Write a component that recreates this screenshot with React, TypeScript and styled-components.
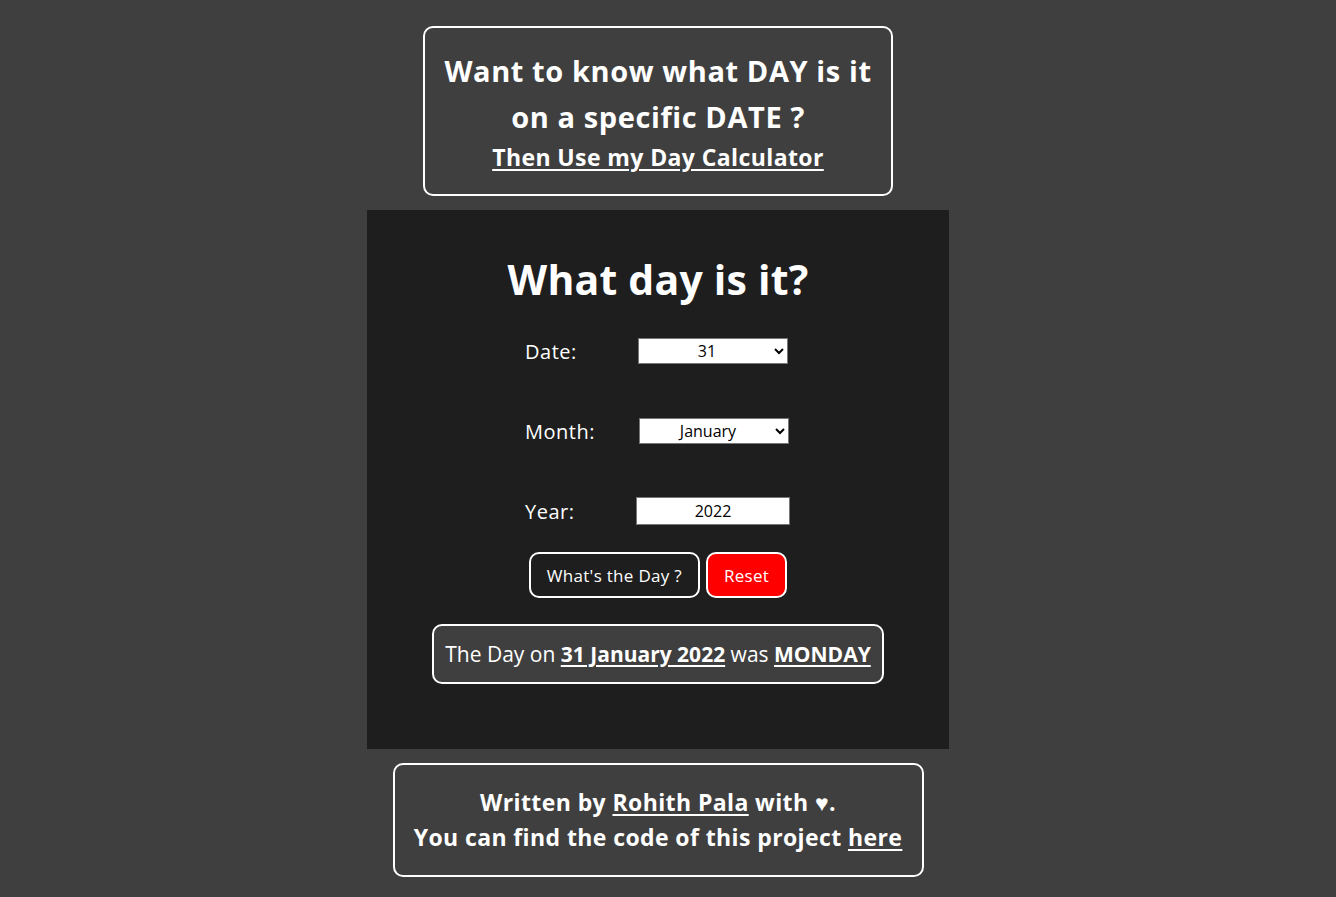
import React, { useState } from "react";
import styled, { createGlobalStyle } from "styled-components";

const Global = createGlobalStyle`
  html, body { margin: 0; padding: 0; background: #3f3f3f; }
  body { font-family: "Open Sans", "Liberation Sans", sans-serif; color: #fff; }
`;

const Page = styled.div`
  display: flex;
  flex-direction: column;
  align-items: center;
  padding-top: 26px;
  padding-right: 20px;
  gap: 14px;
  min-height: 897px;
  box-sizing: border-box;
`;

const Banner = styled.div`
  width: 470px;
  height: 170px;
  box-sizing: border-box;
  border: 2px solid #fff;
  border-radius: 10px;
  display: flex;
  flex-direction: column;
  align-items: center;
  justify-content: center;
  text-align: center;
`;

const BannerTitle = styled.div`
  font-size: 29px;
  font-weight: 700;
  line-height: 46px;
  letter-spacing: 0.6px;
`;

const BannerLink = styled.a`
  font-size: 23px;
  font-weight: 700;
  color: #fff;
  text-decoration: underline;
  text-underline-offset: 3px;
  line-height: 34px;
  letter-spacing: 0.4px;
`;

const Card = styled.div`
  width: 582px;
  height: 539px;
  box-sizing: border-box;
  background: #1e1e1e;
  display: flex;
  flex-direction: column;
  align-items: center;
  padding-top: 40px;
`;

const Title = styled.h1`
  margin: 0;
  font-size: 41px;
  font-weight: 700;
  line-height: 58px;
  letter-spacing: 0.2px;
`;

const Form = styled.div`
  display: grid;
  grid-template-columns: 113px 155px;
  grid-auto-rows: 80px;
  margin-left: 2px;
  align-items: center;
  margin-top: 3px;
`;

const Row = styled.div`
  display: contents;
`;

const Label = styled.label`
  font-size: 20px;
  font-weight: 400;
  letter-spacing: 0.5px;
`;

const Select = styled.select<{ $shift?: number }>`
  width: 150px;
  height: 26px;
  margin-left: ${(p) => p.$shift ?? 0}px;
  font-family: "Open Sans", "Liberation Sans", sans-serif;
  font-size: 16px;
  text-align: center;
  text-align-last: center;
  background: #fff;
  color: #000;
  border: 1px solid #767676;
  border-radius: 0;
`;

const YearInput = styled.input`
  width: 154px;
  height: 28px;
  box-sizing: border-box;
  margin-left: -2px;
  font-family: "Open Sans", "Liberation Sans", sans-serif;
  font-size: 16px;
  text-align: center;
  border: 1px solid #767676;
  color: #000;
  background: #fff;
  padding: 0;
`;

const Buttons = styled.div`
  display: flex;
  gap: 6px;
  margin-top: 1px;
`;

const Button = styled.button<{ $danger?: boolean }>`
  height: 46px;
  padding: 0 16px;
  border: 2px solid #fff;
  border-radius: 10px;
  background: ${(p) => (p.$danger ? "#ff0000" : "#1e1e1e")};
  color: #fff;
  font-family: "Open Sans", "Liberation Sans", sans-serif;
  font-size: 17px;
  letter-spacing: 0.3px;
  cursor: pointer;
`;

const Result = styled.div`
  margin-top: 26px;
  width: 452px;
  height: 60px;
  box-sizing: border-box;
  background: #3f3f3f;
  border: 2px solid #fff;
  border-radius: 10px;
  display: flex;
  align-items: center;
  justify-content: center;
  font-size: 21px;
  white-space: nowrap;
`;

const Strong = styled.span`
  font-weight: 700;
  text-decoration: underline;
  text-underline-offset: 3px;
`;

const Footer = styled.div`
  width: 531px;
  height: 114px;
  box-sizing: border-box;
  border: 2px solid #fff;
  border-radius: 10px;
  display: flex;
  flex-direction: column;
  align-items: center;
  justify-content: center;
  font-size: 23px;
  font-weight: 700;
  line-height: 35px;
  letter-spacing: 0.4px;
  text-align: center;
`;

const FooterLink = styled.a`
  color: #fff;
  text-decoration: underline;
  text-underline-offset: 3px;
`;

const months = [
  "January","February","March","April","May","June","July","August","September","October","November","December",
];

export default function App() {
  const [date, setDate] = useState("31");
  const [month, setMonth] = useState("January");
  const [year, setYear] = useState("2022");
  return (
    <>
      <Global />
      <Page>
        <Banner>
          <BannerTitle>
            Want to know what DAY is it
            <br />
            on a specific DATE ?
          </BannerTitle>
          <BannerLink href="#">Then Use my Day Calculator</BannerLink>
        </Banner>
        <Card>
          <Title>What day is it?</Title>
          <Form>
            <Row>
              <Label>Date:</Label>
              <Select value={date} onChange={(e) => setDate(e.target.value)}>
                {Array.from({ length: 31 }, (_, i) => (
                  <option key={i} value={String(i + 1)}>{i + 1}</option>
                ))}
              </Select>
            </Row>
            <Row>
              <Label>Month:</Label>
              <Select $shift={1} value={month} onChange={(e) => setMonth(e.target.value)}>
                {months.map((m) => (
                  <option key={m} value={m}>{m}</option>
                ))}
              </Select>
            </Row>
            <Row>
              <Label>Year:</Label>
              <YearInput value={year} onChange={(e) => setYear(e.target.value)} />
            </Row>
          </Form>
          <Buttons>
            <Button>What's the Day ?</Button>
            <Button $danger>Reset</Button>
          </Buttons>
          <Result>
            The Day on&nbsp;<Strong>31 January 2022</Strong>&nbsp;was&nbsp;<Strong>MONDAY</Strong>
          </Result>
        </Card>
        <Footer>
          <div>
            Written by <FooterLink href="#">Rohith Pala</FooterLink> with ♥.
          </div>
          <div>
            You can find the code of this project <FooterLink href="#">here</FooterLink>
          </div>
        </Footer>
      </Page>
    </>
  );
}
